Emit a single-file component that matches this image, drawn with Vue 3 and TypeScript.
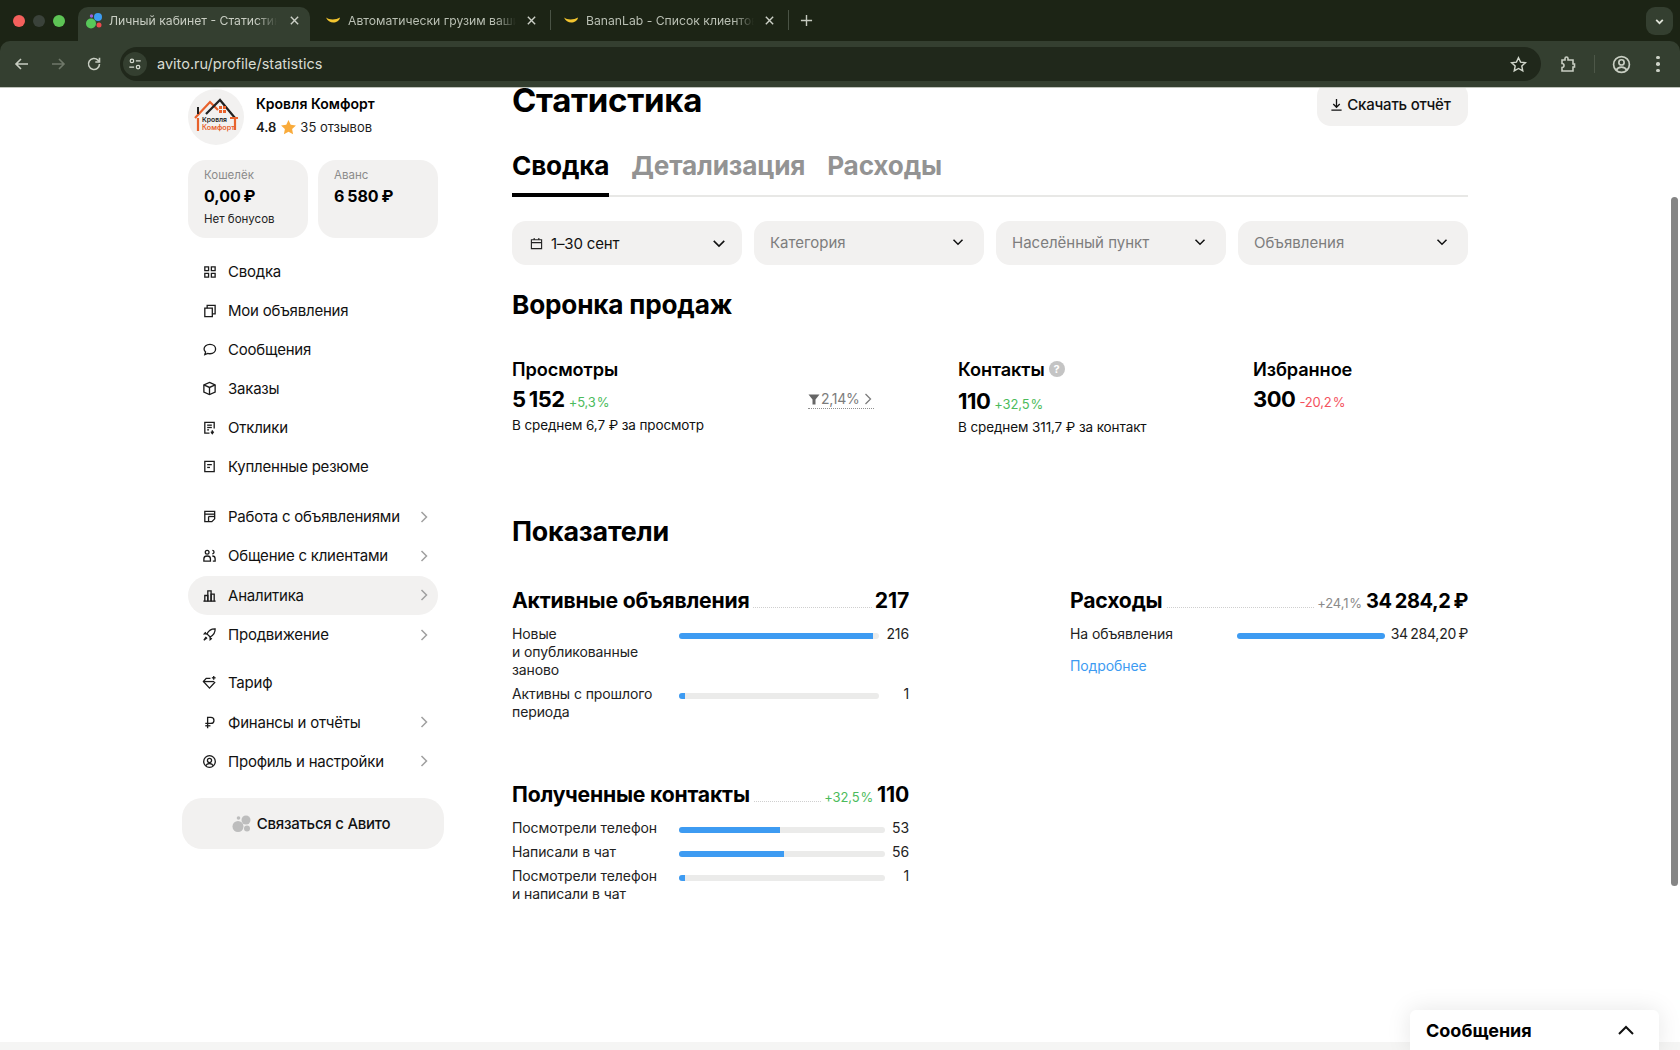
<script setup lang="ts">
interface NavItem { label: string; icon: string[]; arrow?: boolean; active?: boolean }

const tabs = [
  { title: 'Личный кабинет - Статистика', active: true, fav: 'avito' },
  { title: 'Автоматически грузим ваши', active: false, fav: 'banana' },
  { title: 'BananLab - Список клиентов', active: false, fav: 'banana' },
]

const navTop: NavItem[] = [
  { label: 'Сводка', icon: ['M3 3h4v4H3z', 'M10 3h4v4h-4z', 'M3 10h4v4H3z', 'M10 10h4v4h-4z'] },
  { label: 'Мои объявления', icon: ['M3 5.500h8v9H3z', 'M5.500 5.500V2.500H14v9h-3'] },
  { label: 'Сообщения', icon: ['M8.500 2.500c3.600 0 6 2.200 6 5s-2.400 5-6 5c-.9 0-1.700-.1-2.400-.4L3 13.500l.8-2.900C2.800 9.700 2.200 8.700 2.200 7.500c0-2.800 2.600-5 6.300-5z'] },
  { label: 'Заказы', icon: ['M8 1.500l6 2.700v7.600l-6 2.700-6-2.700V4.200z', 'M2 4.200l6 2.700 6-2.700', 'M8 6.900v7.600'] },
  { label: 'Отклики', icon: ['M8 14H3V2.500h10V9', 'M5.500 5.500h5', 'M5.500 8h5', 'M5.500 10.500h2', 'M11 11v3.500', 'M9.500 12.500l1.500 2 1.500-2'] },
  { label: 'Купленные резюме', icon: ['M3 2.500h10v11H3z', 'M5.500 6h5', 'M5.500 9h3'] },
]
const navMid: NavItem[] = [
  { label: 'Работа с объявлениями', arrow: true, icon: ['M3 13.500V2.500h10.500v8l-3 3z', 'M3 5.500h10.500', 'M7 8h6.500', 'M7 8v5.500'] },
  { label: 'Общение с клиентами', arrow: true, icon: ['M5.500 2.500a2 2 0 1 1 0 4 2 2 0 0 1 0-4z', 'M11 2.500a1.800 1.800 0 1 1 0 3.600', 'M2 14v-2.500C2 9.500 3.500 8.500 5.500 8.500S9 9.500 9 11.500V14z', 'M11 8.500c1.800 0 3 1 3 3V14h-2.500'] },
  { label: 'Аналитика', arrow: true, active: true, icon: ['M1.500 14h13', 'M3 14V8h3.200v6', 'M6.200 14V3h3.500v11', 'M9.700 14V6.500h3.300V14'] },
  { label: 'Продвижение', arrow: true, icon: ['M14 2c-4-.2-6.700 1.500-8.700 5.300l3.400 3.400C12.500 8.700 14.200 6 14 2z', 'M5.300 7.300H2.500L4 5.500', 'M8.700 10.700v2.800l1.800-1.500', 'M4.500 10.500l-2.500 3.500 3.500-2.500'] },
]
const navBot: NavItem[] = [
  { label: 'Тариф', icon: ['M9 3.500H4.500L1.500 7 8 14l6-6.500', 'M1.500 7H13', 'M12.500 1v4', 'M10.500 3h4'] },
  { label: 'Финансы и отчёты', arrow: true, icon: ['M6 14V2.500h3.500a3 3 0 0 1 0 6.500H3.500', 'M3.500 11.500H9'] },
  { label: 'Профиль и настройки', arrow: true, icon: ['M8 1.800a6.200 6.200 0 1 1 0 12.400A6.200 6.200 0 0 1 8 1.800z', 'M8 4.700a2.200 2.200 0 1 1 0 4.400 2.200 2.200 0 0 1 0-4.400z', 'M4 12.500c.8-1.700 2.300-2.400 4-2.400s3.200.7 4 2.400'] },
]

const selects = [
  { label: '1–30 сент', date: true },
  { label: 'Категория' },
  { label: 'Населённый пункт' },
  { label: 'Объявления' },
]

const activeRows = [
  { label: 'Новые\nи опубликованные\nзаново', pct: 97, value: '216' },
  { label: 'Активны с прошлого периода', pct: 3, value: '1' },
]
const contactRows = [
  { label: 'Посмотрели телефон', pct: 48.800, value: '53' },
  { label: 'Написали в чат', pct: 51.200, value: '56' },
  { label: 'Посмотрели телефон\nи написали в чат', pct: 3, value: '1' },
]
</script>

<template>
  <div class="app">
    <header class="chrome">
      <div class="tabstrip">
        <div class="lights">
          <i class="light red"></i><i class="light grey"></i><i class="light green"></i>
        </div>
        <div v-for="t in tabs" :key="t.title" class="tab" :class="{ active: t.active }">
          <svg v-if="t.fav === 'avito'" class="fav" viewBox="0 0 18 18">
            <circle cx="6" cy="11.500" r="5" fill="#58c85a" />
            <circle cx="13" cy="5" r="4" fill="#3d9df2" />
            <circle cx="14" cy="13" r="2.500" fill="#ef4a4f" />
            <circle cx="6.500" cy="4" r="1.700" fill="#9b5de0" />
          </svg>
          <svg v-else class="fav" viewBox="0 0 18 18">
            <path d="M2 5.500c3 2.500 10 2.500 14 0-1 6-11 7.500-14 0z" fill="#f3c52f" />
          </svg>
          <span class="tab-title">{{ t.title }}</span>
          <svg class="tab-close" viewBox="0 0 12 12"><path d="M2 2l8 8M10 2l-8 8" /></svg>
          <span class="tab-sep"></span>
        </div>
        <svg class="tab-plus" viewBox="0 0 14 14"><path d="M7 1v12M1 7h12" /></svg>
        <div class="strip-space"></div>
        <div class="tab-menu">
          <svg viewBox="0 0 10 10"><path d="M2 3.500L5 6.500 8 3.500" /></svg>
        </div>
      </div>
      <div class="toolbar">
        <svg class="tool" viewBox="0 0 18 18"><path d="M15 9H3M8 4L3 9l5 5" /></svg>
        <svg class="tool dim" viewBox="0 0 18 18"><path d="M3 9h12M10 4l5 5-5 5" /></svg>
        <svg class="tool" viewBox="0 0 18 18"><path d="M14.500 9a5.500 5.500 0 1 1-1.600-3.900L14.500 7" /><path d="M14.500 2.800V7h-4.200" /></svg>
        <div class="urlbar">
          <span class="site-ico">
            <svg viewBox="0 0 16 16"><circle cx="4.500" cy="4.500" r="2" /><path d="M9 4.500h5.500M1.500 11.500H7" /><circle cx="11.500" cy="11.500" r="2" /></svg>
          </span>
          <span class="url">avito.ru/profile/statistics</span>
          <svg class="star" viewBox="0 0 18 18"><path d="M9 1.800l2.200 4.700 5.100.6-3.800 3.500 1 5.100L9 13.200l-4.500 2.500 1-5.100L1.700 7.100l5.100-.6z" /></svg>
        </div>
        <svg class="tool ext" viewBox="0 0 18 18"><path d="M3 5h3V3.500a1.500 1.500 0 0 1 3 0V5h5v4h1.500v3H14v4H3v-3.500a2 2 0 0 0 0-4z" /></svg>
        <span class="tool-sep"></span>
        <svg class="tool prof" viewBox="0 0 18 18"><circle cx="9" cy="9" r="7.500" /><circle cx="9" cy="7" r="2.500" /><path d="M4 14.500c1-2.200 3-3 5-3s4 .8 5 3" /></svg>
        <div class="dots"><i></i><i></i><i></i></div>
      </div>
    </header>

    <main class="page">
      <div class="columns">
        <aside class="side">
          <div class="profile">
            <div class="avatar">
              <svg viewBox="0 0 56 56">
                <path d="M7 29L22 13l8 8" fill="none" stroke="#e8622c" stroke-width="2.200" />
                <path d="M18 25L32 11l15 18" fill="none" stroke="#222" stroke-width="2.200" />
                <path d="M10 18v7" stroke="#222" stroke-width="2" />
                <path d="M31 17h3v3h-3zM35 17h3v3h-3zM31 21h3v3h-3zM35 21h3v3h-3z" fill="#e8622c" />
                <path d="M10 29v13M47 29v12M42 29h8" stroke="#e8622c" stroke-width="2.200" fill="none" />
                <text x="14" y="33" class="logo-a">Кровля</text>
                <text x="14" y="41" class="logo-b">Комфорт</text>
              </svg>
            </div>
            <div class="profile-text">
              <div class="name">Кровля Комфорт</div>
              <div class="rating">
                <b>4.8</b>
                <svg viewBox="0 0 16 16"><path d="M8 1l2.100 4.500 4.900.6-3.600 3.400.9 4.900L8 11.900l-4.300 2.500.9-4.900L1 6.100l4.900-.6z" fill="#f9ab3b" /></svg>
                <span>35 отзывов</span>
              </div>
            </div>
          </div>

          <div class="wallets">
            <div class="wallet">
              <div class="w-label">Кошелёк</div>
              <div class="w-value">0,00 ₽</div>
              <div class="w-note">Нет бонусов</div>
            </div>
            <div class="wallet">
              <div class="w-label">Аванс</div>
              <div class="w-value">6 580 ₽</div>
            </div>
          </div>

          <nav class="nav nav-top">
            <a v-for="n in navTop" :key="n.label" class="nav-row">
              <svg class="nav-ico" viewBox="0 0 16 16"><path v-for="d in n.icon" :key="d" :d="d" /></svg>
              <span class="nav-label">{{ n.label }}</span>
            </a>
          </nav>
          <nav class="nav nav-mid">
            <a v-for="n in navMid" :key="n.label" class="nav-row" :class="{ active: n.active }">
              <svg class="nav-ico" viewBox="0 0 16 16"><path v-for="d in n.icon" :key="d" :d="d" /></svg>
              <span class="nav-label">{{ n.label }}</span>
              <svg v-if="n.arrow" class="nav-arrow" viewBox="0 0 10 14"><path d="M2.500 2l5 5-5 5" /></svg>
            </a>
          </nav>
          <nav class="nav nav-bot">
            <a v-for="n in navBot" :key="n.label" class="nav-row">
              <svg class="nav-ico" viewBox="0 0 16 16"><path v-for="d in n.icon" :key="d" :d="d" /></svg>
              <span class="nav-label">{{ n.label }}</span>
              <svg v-if="n.arrow" class="nav-arrow" viewBox="0 0 10 14"><path d="M2.500 2l5 5-5 5" /></svg>
            </a>
          </nav>

          <button class="contact-btn">
            <svg viewBox="0 0 20 20">
              <circle cx="6" cy="12.500" r="5.500" fill="#bdbdbd" />
              <circle cx="14" cy="6" r="4.500" fill="#bdbdbd" />
              <circle cx="15" cy="14.500" r="3" fill="#bdbdbd" />
              <circle cx="6.500" cy="4" r="1.800" fill="#bdbdbd" />
            </svg>
            <span>Связаться с Авито</span>
          </button>
        </aside>

        <section class="content">
          <div class="head">
            <h1>Статистика</h1>
            <button class="dl-btn">
              <svg viewBox="0 0 14 14"><path d="M7 1v8.500M3.500 6.500L7 10l3.500-3.500M1.500 13h11" /></svg>
              Скачать отчёт
            </button>
          </div>

          <div class="tabs">
            <span class="ctab on">Сводка</span>
            <span class="ctab">Детализация</span>
            <span class="ctab">Расходы</span>
          </div>

          <div class="filters">
            <div v-for="s in selects" :key="s.label" class="select" :class="{ filled: s.date }">
              <svg v-if="s.date" class="cal" viewBox="0 0 14 14"><path d="M1.500 3h11v9.500h-11zM1.500 6h11M4.500 1.200V3M9.500 1.200V3" /></svg>
              <span class="sel-label">{{ s.label }}</span>
              <svg class="sel-chev" viewBox="0 0 16 10"><path d="M2 2l6 6 6-6" /></svg>
            </div>
          </div>

          <h2 class="funnel-h">Воронка продаж</h2>

          <div class="metrics">
            <div class="metric m-views">
              <div class="m-title">Просмотры</div>
              <div class="m-value"><b>5 152</b><em class="up">+5,3 %</em></div>
              <div class="m-sub">В среднем 6,7 ₽ за просмотр</div>
              <div class="conv">
                <svg viewBox="0 0 12 12"><path d="M0.500 1.500h11L7.500 6.500V11.500h-3V6.500z" /></svg>
                <span>2,14%</span>
                <svg class="conv-ch" viewBox="0 0 8 12"><path d="M1.500 1l5 5-5 5" /></svg>
              </div>
            </div>
            <div class="metric m-contacts">
              <div class="m-title">Контакты <span class="help">?</span></div>
              <div class="m-value"><b>110</b><em class="up">+32,5 %</em></div>
              <div class="m-sub">В среднем 311,7 ₽ за контакт</div>
            </div>
            <div class="metric m-fav">
              <div class="m-title">Избранное</div>
              <div class="m-value"><b>300</b><em class="down">-20,2 %</em></div>
            </div>
          </div>

          <h2 class="stats-h">Показатели</h2>

          <div class="stat-grid">
            <div class="stat-left">
              <div class="stat-block">
                <div class="stat-head">
                  <span class="st-title">Активные объявления</span><span class="leader"></span><span class="st-num">217</span>
                </div>
                <div v-for="r in activeRows" :key="r.label" class="bar-row">
                  <span class="bar-label">{{ r.label }}</span>
                  <span class="track"><span class="fill" :style="{ width: r.pct + '%' }"></span></span>
                  <span class="bar-val">{{ r.value }}</span>
                </div>
              </div>
              <div class="stat-block second">
                <div class="stat-head">
                  <span class="st-title">Полученные контакты</span><span class="leader"></span><em class="up head-delta">+32,5 %</em><span class="st-num">110</span>
                </div>
                <div v-for="r in contactRows" :key="r.label" class="bar-row narrow">
                  <span class="bar-label">{{ r.label }}</span>
                  <span class="track"><span class="fill" :style="{ width: r.pct + '%' }"></span></span>
                  <span class="bar-val">{{ r.value }}</span>
                </div>
              </div>
            </div>
            <div class="stat-block">
              <div class="stat-head">
                <span class="st-title">Расходы</span><span class="leader"></span><em class="grey-d head-delta">+24,1 %</em><span class="st-num money">34 284,2 ₽</span>
              </div>
              <div class="bar-row wide">
                <span class="bar-label">На объявления</span>
                <span class="track"><span class="fill" style="width: 100%"></span></span>
                <span class="bar-val">34 284,20 ₽</span>
              </div>
              <a class="more">Подробнее</a>
            </div>
          </div>
        </section>
      </div>
      <div class="foot-strip"></div>
      <div class="scroll-thumb"></div>
      <div class="messenger">
        <span>Сообщения</span>
        <svg viewBox="0 0 18 12"><path d="M2 10l7-7 7 7" /></svg>
      </div>
    </main>
  </div>
</template>

<style>
html, body { margin: 0; padding: 0; overflow: hidden; background: #fff; }
</style>

<style scoped>
.app {
  width: 1680px;
  height: 1050px;
  display: flex;
  flex-direction: column;
  overflow: hidden;
  font-family: Inter, "Noto Sans", sans-serif;
  color: #000;
  background: #fff;
}
svg { display: block; flex: none; }

/* browser chrome */
.chrome { height: 88px; flex: none; background: #1c2415; display: flex; flex-direction: column; }
.tabstrip { height: 41px; display: flex; align-items: flex-end; flex: none; }
.lights { width: 78px; height: 41px; display: flex; align-items: center; gap: 8px; padding: 0 0 0 13px; box-sizing: border-box; flex: none; }
.light { width: 12px; height: 12px; border-radius: 50%; }
.light.red { background: #f4605c; }
.light.grey { background: #3a423a; }
.light.green { background: #5dc455; }
.tab { width: 238px; height: 34px; display: flex; align-items: center; padding: 0 0 7px 8px; box-sizing: border-box; color: #b9bfb3; position: relative; flex: none; }
.tab.active { width: 232px; background: #343f30; border-radius: 10px 10px 0 0; padding-left: 7px; color: #c8cdc2; }
.tab:nth-child(3) { width: 241px; padding-left: 14px; }
.tab:nth-child(4) { width: 238px; padding-left: 11px; }
.fav { width: 18px; height: 18px; margin-right: 6px; }
.tab-title { font-size: 12.200px; width: 168px; white-space: nowrap; overflow: hidden; -webkit-mask-image: linear-gradient(90deg, #000 88%, transparent); mask-image: linear-gradient(90deg, #000 88%, transparent); }
.tab-close { width: 11px; height: 11px; margin-left: 10px; fill: none; stroke: #ccd0c7; stroke-width: 1.500; }
.tab.active .tab-close { margin-left: 12px; }
.tab-sep { position: absolute; right: 0; top: 3px; height: 20px; width: 1px; background: #4a5345; }
.tab.active .tab-sep { display: none; }
.tab-plus { width: 13px; height: 13px; margin: 0 0 14px 11px; fill: none; stroke: #c5cabf; stroke-width: 1.500; }
.strip-space { flex: 1; }
.tab-menu { width: 27px; height: 28px; margin: 0 7px 6px 0; background: #343f30; border-radius: 9px; display: flex; align-items: center; justify-content: center; }
.tab-menu svg { width: 11px; height: 11px; fill: none; stroke: #dfe3d8; stroke-width: 1.600; }

.toolbar { height: 47px; background: #343f30; border-radius: 10px 10px 0 0; display: flex; align-items: center; padding: 0 0 0 13px; border-bottom: 1px solid #bfc3bb; box-sizing: border-box; flex: none; }
.tool { width: 18px; height: 18px; fill: none; stroke: #c8cec2; stroke-width: 1.600; margin-right: 18px; }
.tool.dim { stroke: #6f7869; }
.urlbar { width: 1421px; height: 34px; margin-left: -1px; background: #20281b; border-radius: 17px; display: flex; align-items: center; padding: 0 14px 0 3px; box-sizing: border-box; }
.site-ico { width: 24px; height: 24px; border-radius: 50%; background: #343f30; display: flex; align-items: center; justify-content: center; }
.site-ico svg { width: 14px; height: 14px; fill: none; stroke: #d6dbd0; stroke-width: 1.400; }
.url { color: #d8dcd2; font-size: 14.500px; margin: 0 0 2px 10px; flex: 1; }
.star { width: 17px; height: 17px; fill: none; stroke: #d2d7cc; stroke-width: 1.500; }
.tool.ext { margin: 0 0 0 18px; }
.tool-sep { width: 1px; height: 18px; background: #4d5748; margin: 0 17px; }
.tool.prof { margin: 0; width: 19px; height: 19px; }
.dots { display: flex; flex-direction: column; gap: 3px; margin-left: 25px; }
.dots i { width: 3.500px; height: 3.500px; border-radius: 50%; background: #cdd2c7; }

/* page */
.page { flex: 1; min-height: 0; position: relative; overflow: hidden; display: flex; flex-direction: column; }
.columns { flex: 1; min-height: 0; display: flex; gap: 74px; padding-left: 188px; }
.foot-strip { height: 8px; background: #f5f5f4; flex: none; }

/* sidebar */
.side { width: 250px; flex: none; padding-top: 1px; }
.profile { display: flex; align-items: center; gap: 12px; }
.avatar { width: 56px; height: 56px; border-radius: 50%; background: #f2f1f0; overflow: hidden; flex: none; }
.avatar svg { width: 56px; height: 56px; }
.logo-a { font: 600 6.800px Inter, sans-serif; fill: #222; }
.logo-b { font: 600 7.200px Inter, sans-serif; fill: #e8622c; }
.profile-text { display: flex; flex-direction: column; gap: 5px; margin-top: -4px; }
.name { font-size: 14px; font-weight: 600; line-height: 19px; }
.rating { display: flex; align-items: center; font-size: 13px; line-height: 19px; color: #1c1c1c; }
.rating b { font-weight: 600; }
.rating svg { width: 17px; height: 17px; margin: 0 3px 0 4px; }
.wallets { display: flex; gap: 10px; margin-top: 15px; }
.wallet { width: 120px; height: 78px; background: #f2f1f0; border-radius: 18px; padding: 8px 16px 0; box-sizing: border-box; }
.w-label { font-size: 11.500px; line-height: 14px; color: #8b8b8b; }
.w-value { font-size: 16px; font-weight: 700; line-height: 20px; margin-top: 4px; word-spacing: -1px; }
.w-note { font-size: 11.500px; line-height: 14px; margin-top: 6px; color: #222; }
.nav-top { margin-top: 14px; }
.nav-row { height: 39px; display: flex; align-items: center; padding: 0 8px 0 14px; box-sizing: border-box; border-radius: 19.500px; font-size: 15px; letter-spacing: -0.220px; color: #111; }
.nav-mid { margin-top: 11px; }
.nav-mid .nav-row, .nav-bot .nav-row { height: 39.300px; }
.nav-bot { margin-top: 9px; }
.nav-row.active { background: #f2f1f0; }
.nav-ico { width: 15px; height: 15px; fill: none; stroke: #1c1c1c; stroke-width: 1.400; margin-right: 11px; }
.nav-label { flex: 1; white-space: nowrap; }
.nav-arrow { width: 10px; height: 14px; fill: none; stroke: #a0a0a0; stroke-width: 1.500; margin-right: 1px; }
.contact-btn { width: 262px; height: 51px; margin: 17px 0 0 -6px; padding: 0 4px 0 0; border: 0; border-radius: 20px; background: #f2f1f0; display: flex; align-items: center; justify-content: center; gap: 5px; font: 500 15px Inter, sans-serif; letter-spacing: -0.250px; color: #111; }
.contact-btn svg { width: 20px; height: 20px; }

/* content */
.content { width: 956px; flex: none; margin-top: -6px; }
.head { display: flex; justify-content: space-between; align-items: flex-start; height: 44px; }
h1 { font-size: 33px; line-height: 36px; font-weight: 700; margin: 0; letter-spacing: -0.300px; }
.dl-btn { width: 151px; height: 44px; padding: 0 4px 0 0; border: 0; background: #f2f1f0; border-radius: 14px; display: flex; align-items: center; justify-content: center; gap: 4px; font: 500 15px Inter, sans-serif; color: #111; letter-spacing: -0.200px; }
.dl-btn svg { width: 13px; height: 15px; fill: none; stroke: #111; stroke-width: 1.400; }
.tabs { display: flex; gap: 22px; margin-top: 22px; height: 49px; border-bottom: 2px solid #e8e8e6; box-sizing: border-box; }
.ctab { font-size: 26.200px; line-height: 36px; font-weight: 700; color: #939393; height: 49px; box-sizing: border-box; letter-spacing: -0.200px; }
.ctab.on { color: #000; border-bottom: 4px solid #000; }
.filters { display: grid; grid-template-columns: repeat(4, 1fr); gap: 12px; margin-top: 24px; }
.select { height: 44px; background: #f2f1f0; border-radius: 14px; display: flex; align-items: center; padding: 0 20px 2px 16px; box-sizing: border-box; font-size: 15px; color: #7d7d7d; }
.sel-chev { width: 12px; height: 8px; fill: none; stroke: #111; stroke-width: 2; }
.select.filled { color: #111; padding: 0 16px 0 18px; letter-spacing: -0.150px; }
.select.filled .sel-chev { width: 14px; height: 9px; stroke-width: 1.800; }
.cal { width: 13px; height: 13px; fill: none; stroke: #222; stroke-width: 1.200; margin-right: 8px; }
.sel-label { flex: 1; }
h2 { font-size: 26.200px; line-height: 36px; font-weight: 700; margin: 0; letter-spacing: -0.200px; }
.funnel-h { margin-top: 22px; }
.metrics { display: flex; margin-top: 34px; height: 80px; }
.metric { position: relative; }
.m-views { width: 446px; }
.m-contacts { width: 295px; }
.m-title { font-size: 18.200px; line-height: 24px; font-weight: 600; display: flex; align-items: center; gap: 4px; letter-spacing: -0.100px; }
.help { width: 16px; height: 16px; border-radius: 50%; background: #c4c4c4; color: #fff; font-size: 11px; font-weight: 700; display: flex; align-items: center; justify-content: center; }
.m-value { display: flex; align-items: baseline; gap: 4px; line-height: 28px; margin-top: 4px; }
.m-contacts .m-value { margin-top: 6px; }
.m-value b { font-size: 22px; font-weight: 700; letter-spacing: -0.500px; word-spacing: -1.500px; }
em { font-style: normal; font-size: 13px; word-spacing: -2.500px; letter-spacing: -0.150px; }
.up { color: #4cbb5c; }
.down { color: #f4515d; }
.grey-d { color: #8a8a8a; }
.m-sub { font-size: 13.500px; line-height: 20px; margin-top: -1px; color: #111; letter-spacing: -0.100px; }
.conv { position: absolute; left: 296px; top: 32px; width: 66px; height: 19px; display: flex; align-items: center; gap: 1px; border-bottom: 1px dotted #8f8f8f; color: #7c7c7c; font-size: 14px; letter-spacing: -0.300px; }
.conv svg { width: 12px; height: 12px; fill: #666; }
.conv .conv-ch { width: 8px; height: 12px; margin-left: 4px; fill: none; stroke: #7c7c7c; stroke-width: 1.300; }
.stats-h { margin-top: 76px; font-size: 26.800px; }
.stat-grid { display: grid; grid-template-columns: 397px 398px; gap: 161px; margin-top: 37px; }
.stat-block.second { margin-top: 59px; }
.stat-head { display: flex; align-items: baseline; height: 28px; line-height: 28px; margin-bottom: 11px; }
.st-title, .st-num { font-size: 21.200px; font-weight: 700; white-space: nowrap; letter-spacing: -0.200px; }
.st-num.money { font-size: 20px; letter-spacing: -0.400px; word-spacing: -1.200px; }
.leader { flex: 1; border-bottom: 1px dotted #cfcfcf; margin: 0 3px 0 4px; }
.head-delta { margin-right: 4px; white-space: nowrap; }
.bar-row { display: grid; grid-template-columns: 167px 1fr 30px; font-size: 14px; line-height: 18px; margin-bottom: 6px; color: #222; letter-spacing: -0.100px; }
.bar-row.narrow { grid-template-columns: 167px 1fr 24px; }
.bar-row.wide { grid-template-columns: 167px 1fr 83px; margin-bottom: 12px; margin-top: 1px; }
.bar-row.wide .bar-val { word-spacing: -1.500px; letter-spacing: -0.200px; }
.bar-label { white-space: pre-line; padding-right: 16px; }
.bar-val { text-align: right; white-space: nowrap; }
.track { height: 6px; margin-top: 8px; background: #ebebea; border-radius: 3px; overflow: hidden; display: block; }
.fill { display: block; height: 6px; background: #3d9bf2; }
.more { font-size: 14px; line-height: 18px; color: #3d9bf2; letter-spacing: -0.100px; }

/* overlays */
.scroll-thumb { position: absolute; left: 1671px; top: 109px; width: 7px; height: 689px; border-radius: 4px; background: #858585; }
.messenger { position: absolute; left: 1410px; bottom: 0; width: 249px; height: 40px; background: #fff; border-radius: 6px 6px 0 0; box-shadow: 0 0 24px rgba(0, 0, 0, 0.100); display: flex; align-items: center; justify-content: space-between; padding: 0 24px 0 16px; box-sizing: border-box; font-size: 18px; font-weight: 700; }
.messenger svg { width: 18px; height: 12px; fill: none; stroke: #111; stroke-width: 2; }
</style>
